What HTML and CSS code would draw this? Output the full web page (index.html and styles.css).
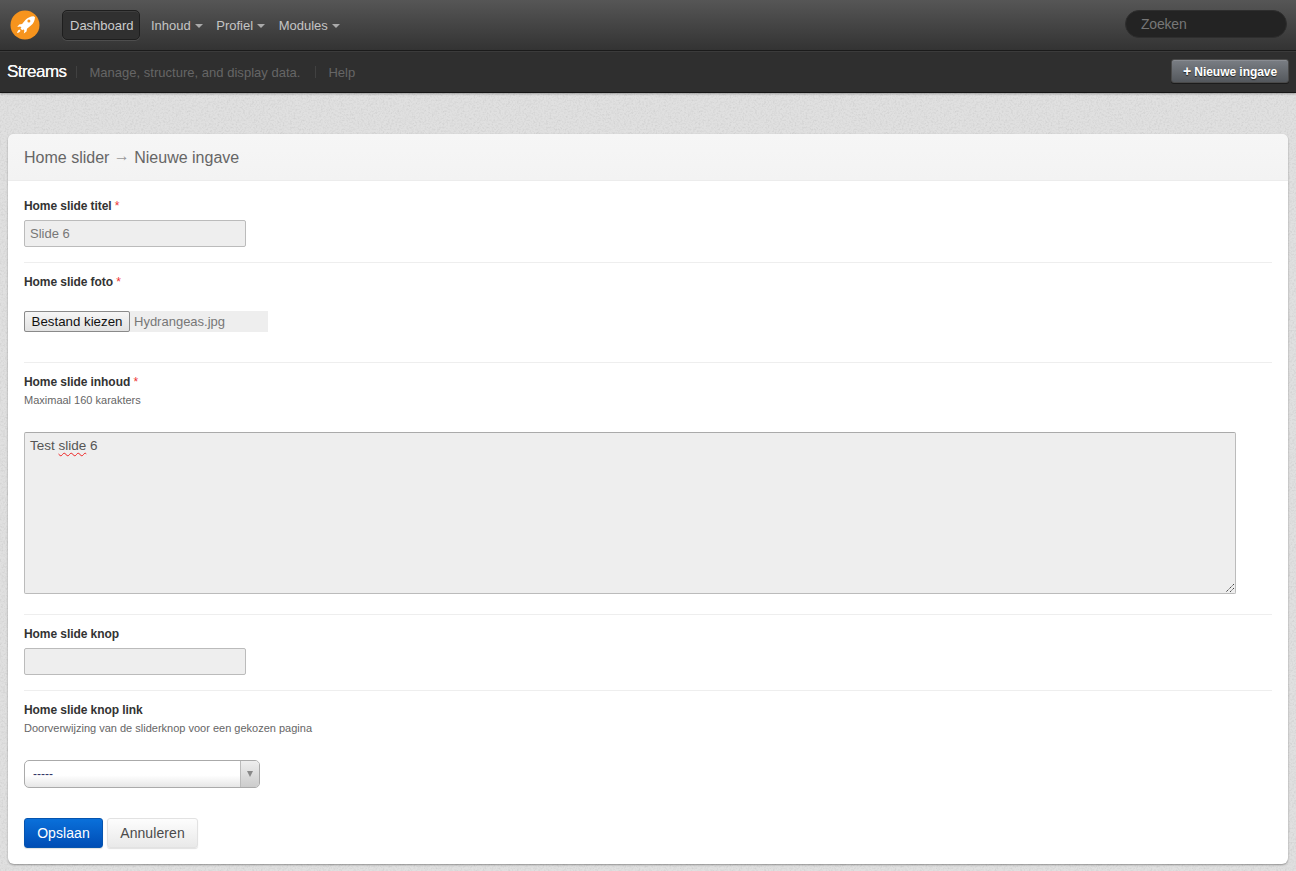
FILE: index.html
```html
<!DOCTYPE html>
<html lang="nl">
<head>
<meta charset="utf-8">
<title>Streams</title>
<link rel="stylesheet" href="styles.css">
</head>
<body>
<header class="topbar">
  <svg class="logo" width="30" height="30" viewBox="0 0 30 30">
    <circle cx="15" cy="15" r="14.5" fill="#f7941d"/>
    <path d="M23.6 6.200c-3.400.2-6.200 1.600-8.200 3.900l-3.300 3.900-2.900.4-2 2.600 3-.5 1.200 1.100-.9 1.100 1.900 1.600.9-1 1.100 1.300-.6 3 2.700-2 .5-2.900 3.900-3.200c2.400-2 3.900-4.800 4.100-8.300z" fill="#fff"/>
    <circle cx="18.900" cy="10.900" r="1.500" fill="#f7941d"/>
    <path d="M9.300 19.500c-1.200.7-2 1.900-2.300 3.600 1.700-.3 2.900-1.100 3.600-2.300z" fill="#fff"/>
  </svg>
  <nav class="mainnav">
    <a class="navitem active">Dashboard</a>
    <a class="navitem">Inhoud<i class="caret"></i></a>
    <a class="navitem">Profiel<i class="caret"></i></a>
    <a class="navitem">Modules<i class="caret"></i></a>
  </nav>
  <input class="search" type="text" placeholder="Zoeken">
</header>
<div class="subbar">
  <span class="subtitle">Streams</span>
  <span class="sep"></span>
  <span class="sublink desc">Manage, structure, and display data.</span>
  <span class="sep"></span>
  <span class="sublink">Help</span>
  <a class="newbtn"><span class="plus">+</span> Nieuwe ingave</a>
</div>
<main class="card">
  <div class="cardhead">Home slider <span class="arrow">→</span> Nieuwe ingave</div>
  <form class="cardbody">
    <div class="row row-title">
      <label class="lbl">Home slide titel <em>*</em></label>
      <input class="field" type="text" value="Slide 6">
    </div>
    <div class="row row-photo">
      <label class="lbl">Home slide foto <em>*</em></label>
      <div class="file"><button class="filebtn" type="button">Bestand kiezen</button><span class="filename">Hydrangeas.jpg</span></div>
    </div>
    <div class="row row-content">
      <label class="lbl">Home slide inhoud <em>*</em></label>
      <small class="hint">Maximaal 160 karakters</small>
      <div class="area">Test <span class="typo">slide</span> 6
        <svg class="grip" width="10" height="10" viewBox="0 0 10 10"><path d="M9 1 1 9M9 5 5 9" stroke="#444" stroke-width="1" stroke-dasharray="1.400 .7" fill="none"/></svg>
      </div>
    </div>
    <div class="row row-button">
      <label class="lbl">Home slide knop</label>
      <input class="field" type="text">
    </div>
    <div class="row row-link">
      <label class="lbl">Home slide knop link</label>
      <small class="hint">Doorverwijzing van de sliderknop voor een gekozen pagina</small>
      <div class="select"><span class="selval">-----</span><span class="selarrow"><i></i></span></div>
    </div>
    <div class="actions">
      <button class="btn primary" type="button">Opslaan</button>
      <button class="btn" type="button">Annuleren</button>
    </div>
  </form>
</main>
</body>
</html>
```
FILE: styles.css
```css
* { box-sizing: border-box; }
html, body { margin: 0; padding: 0; }
body {
  width: 1296px;
  height: 871px;
  overflow: hidden;
  background-color: #e0e0e0;
  background-image: url("data:image/svg+xml,%3Csvg xmlns='http://www.w3.org/2000/svg' width='256' height='256'%3E%3Cfilter id='n'%3E%3CfeTurbulence type='fractalNoise' baseFrequency='.55' numOctaves='2' stitchTiles='stitch'/%3E%3CfeColorMatrix values='0 0 0 0 .45 0 0 0 0 .45 0 0 0 0 .45 .5 .5 0 0 -.44'/%3E%3C/filter%3E%3Crect width='256' height='256' filter='url(%23n)'/%3E%3C/svg%3E");
  font-family: "Liberation Sans", Arial, sans-serif;
  color: #333;
}

.topbar {
  height: 51px;
  display: flex;
  align-items: center;
  padding: 0 9px 1px 10px;
  background: linear-gradient(#565656, #333333);
  border-bottom: 1px solid #1c1c1c;
}
.logo { flex: none; }
.mainnav { display: flex; align-items: center; margin-left: 22px; flex: 1; }
.navitem {
  font-size: 13px;
  color: #c4c4c4;
  height: 30px;
  line-height: 30px;
  padding: 0 4.500px 0 7px;
  border: 1px solid transparent;
  border-radius: 5px;
  white-space: nowrap;
}
.navitem.active {
  color: #ccc;
  width: 78px;
  margin-right: 3px;
  background: #303030;
  border-color: #1e1e1e;
  box-shadow: 0 1px 0 rgba(255,255,255,.1), inset 0 1px 0 rgba(255,255,255,.07);
}
.caret {
  display: inline-block;
  margin-left: 4px;
  vertical-align: 2px;
  border: 4px solid transparent;
  border-top: 4px solid #aaa;
  border-bottom: 0;
}
.search {
  width: 162px;
  height: 28px;
  margin-top: -1px;
  padding: 0 15px;
  background: #232323;
  border: 1px solid #2e2e2e;
  border-radius: 14px;
  color: #ccc;
  font: 14px "Liberation Sans", Arial, sans-serif;
  letter-spacing: -.2px;
  outline: 0;
}
.search::placeholder { color: #777; opacity: 1; }

.subbar {
  height: 42px;
  display: flex;
  align-items: center;
  padding: 0 7px 0 7px;
  background: #2f2f2f;
  border-top: 1px solid #3b3b3b;
  border-bottom: 1px solid #161616;
  box-shadow: 0 1px 2px rgba(0,0,0,.3);
}
.subtitle { font-size: 17px; letter-spacing: -.55px; color: #f8f8f8; text-shadow: 0 0 .5px #fff; }
.sep { width: 1px; height: 12px; background: #414141; margin: 0 12px 0 10px; }
.desc + .sep { margin: 0 12px 0 15px; }
.sublink { font-size: 13px; color: #666; }
.desc { letter-spacing: .02px; }
.newbtn {
  margin-left: auto;
  height: 24px;
  width: 118px;
  margin-top: -2px;
  text-align: center;
  font-size: 12px;
  font-weight: bold;
  line-height: 22px;
  letter-spacing: -.05px;
  color: #fff;
  white-space: nowrap;
  border-radius: 3px;
  background: linear-gradient(#7a7e84, #54585d);
  border: 1px solid #4a4a4a;
  box-shadow: inset 0 1px 0 rgba(255,255,255,.12), 0 1px 0 #1c1c1c;
  text-shadow: 0 1px 1px #222;
}
.plus { font-size: 14px; }

.card {
  position: relative;
  margin: 41px 8px 0;
  height: 730px;
  background: #fff;
  border-radius: 6px;
  box-shadow: 0 1px 2px rgba(0,0,0,.35);
}
.cardhead {
  height: 47px;
  padding: 0 16px;
  font-size: 16px;
  line-height: 47px;
  color: #666;
  background: linear-gradient(#f6f6f6, #f3f3f3);
  border-bottom: 1px solid #ececec;
  border-radius: 6px 6px 0 0;
}
.arrow { color: #999; position: relative; top: -2px; }
.cardbody { display: flex; flex-direction: column; padding: 0 16px; }

.row { border-bottom: 1px solid #eee; display: flex; flex-direction: column; align-items: flex-start; }
.row-title { height: 82px; padding-top: 18px; }
.row-photo { height: 100px; padding-top: 12px; }
.row-content { height: 252px; padding-top: 12px; }
.row-button { height: 76px; padding-top: 12px; }
.row-link { height: 110px; padding-top: 12px; border-bottom: 0; }

.lbl { font-size: 12px; font-weight: bold; line-height: 14px; letter-spacing: -.07px; color: #333; }
.lbl em { color: #e33; font-style: normal; font-weight: normal; }
.hint { font-size: 11px; line-height: 12px; margin-top: 5px; color: #666; }

.field {
  display: block;
  width: 222px;
  height: 27px;
  margin-top: 7px;
  padding: 0 5px;
  background: #eee;
  border: 1px solid #bbb;
  border-radius: 2px;
  color: #777;
  font: 13px "Liberation Sans", Arial, sans-serif;
  outline: 0;
}

.file {
  display: flex;
  align-items: center;
  width: 244px;
  height: 21px;
  margin-top: 22px;
  background: #eee;
}
.filebtn {
  width: 106px;
  height: 21px;
  padding: 0;
  font: 13.300px "Liberation Sans", Arial, sans-serif;
  color: #111;
  background: linear-gradient(#f6f6f6, #e2e2e2);
  border: 1px solid #8a8a8a;
  border-radius: 2px;
}
.filename { margin-left: 4px; font-size: 13px; color: #777; }

.area {
  position: relative;
  width: 1212px;
  height: 162px;
  margin-top: 26px;
  padding: 5px;
  background: #eee;
  border: 1px solid #bbb;
  border-top-color: #aaa;
  border-radius: 2px;
  font-size: 13.500px;
  line-height: 16px;
  color: #555;
}
.typo { text-decoration: underline wavy #e22; text-decoration-thickness: 1px; text-underline-offset: 2px; }
.grip { position: absolute; right: 0; bottom: 0; }

.select {
  display: flex;
  justify-content: space-between;
  width: 236px;
  height: 28px;
  margin-top: 26px;
  border: 1px solid #aaa;
  border-radius: 5px;
  background: linear-gradient(#fff 55%, #e6e6e6);
  overflow: hidden;
}
.selval { padding-left: 8px; font-size: 12px; line-height: 26px; color: #336; }
.selarrow {
  width: 19px;
  display: flex;
  align-items: center;
  justify-content: center;
  border-left: 1px solid #bbb;
  background: linear-gradient(#eee, #ccc);
}
.selarrow i { border: 3.500px solid transparent; border-top: 6px solid #888; border-bottom: 0; }

.actions { display: flex; gap: 4px; padding-top: 17px; }
.btn {
  height: 30px;
  width: 91px;
  padding: 0;
  font: 14px "Liberation Sans", Arial, sans-serif;
  letter-spacing: .08px;
  color: #4a4a4a;
  background: linear-gradient(#fdfdfd, #e9e9e9);
  border: 1px solid #e2e2e2;
  border-radius: 3px;
  box-shadow: 0 1px 1px rgba(0,0,0,.12);
}
.btn.primary {
  width: 79px;
  color: #fff;
  background: linear-gradient(#0a70da, #004db5);
  border-color: #0654ae;
}
```
